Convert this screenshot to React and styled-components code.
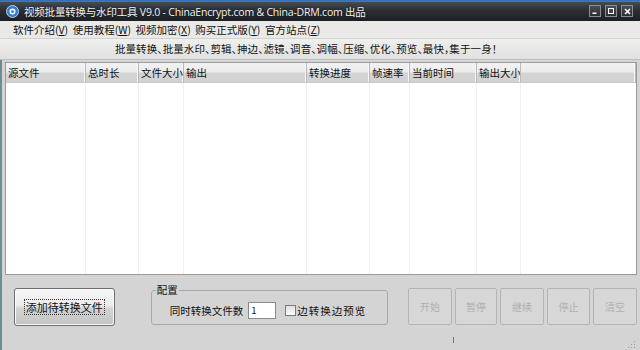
import React from "react";
import styled, { createGlobalStyle } from "styled-components";

const Global = createGlobalStyle`
  html, body { margin: 0; padding: 0; }
  body { width: 640px; height: 350px; overflow: hidden; background: #d6d6d6;
    font-family: "Noto Sans CJK SC", "Noto Sans", sans-serif; }
`;

const Win = styled.div`
  width: 640px; height: 350px; display: flex; flex-direction: column;
  background: #d6d6d6; overflow: hidden;
`;

const TitleBar = styled.div`
  height: 21px; flex: none; display: flex; align-items: center;
  background: linear-gradient(#2f6fba 0px, #3a78c0 1.5px, #454a52 2.5px, #2c3036 10px, #1c1f24 21px);
  color: #fff; padding: 1px 7px 0 6px; gap: 5px; box-sizing: border-box;
`;

const TitleText = styled.span`
  flex: 1; min-width: 0; white-space: nowrap; letter-spacing: -0.2px;
  font-family: "Open Sans", "Noto Sans CJK SC", sans-serif; font-size: 10.5px;
  text-shadow: 0 0 2px rgba(0,0,0,0.6); color: #f4f4f4;
`;

const Controls = styled.div`
  display: flex; gap: 4px; align-items: center; flex: none;
`;

const CtrlBtn = styled.div`
  width: 10px; height: 10px; border: 1px solid #8a8d92; background: linear-gradient(#4a4e54, #2a2d31);
  display: flex; align-items: center; justify-content: center;
`;

const MenuBar = styled.div`
  height: 17px; flex: none; display: flex; align-items: center; gap: 4.5px;
  background: #e9e9e7; padding-left: 13px; font-size: 10.5px; color: #111;
  font-feature-settings: "halt";
`;

const Slogan = styled.div`
  height: 21px; flex: none; display: flex; align-items: center; justify-content: center;
  background: linear-gradient(#f0f0ee, #e0e0de); font-size: 10.5px; color: #111;
  border-bottom: 1px solid #bdbdbd; padding-right: 28px; font-feature-settings: "halt";
  letter-spacing: 0.1px; box-shadow: inset 0 1px 0 #d2d2d2;
`;

const Body = styled.div`
  flex: 1; display: flex; flex-direction: column;
  border-left: 2px solid #6e8d92; padding: 2px 3px 0 3px;
  background: #d4d4d4;
`;

const List = styled.div`
  height: 211px; flex: none; background: #fff; border: 1px solid #9a9a9a;
  display: flex; flex-direction: column; overflow: hidden;
`;

const Header = styled.div`
  height: 19px; flex: none; display: flex;
  background: linear-gradient(#f2f2f2 0%, #ececec 45%, #d4d4d4 55%, #d2d2d2 100%);
  border-bottom: 1px solid #c9c9c9;
`;

const HeadCell = styled.div`
  width: ${p => p.w}px; flex: ${p => (p.grow ? 1 : "none")}; font-size: 10.5px; color: #111;
  padding-left: 2px; display: flex; align-items: center; white-space: nowrap; overflow: hidden;
  border-right: 1px solid #b9b9b9; box-shadow: inset -1px 0 0 #f6f6f6;
  box-sizing: border-box;
`;

const Rows = styled.div`
  flex: 1; display: flex;
`;

const ColLine = styled.div`
  width: ${p => p.w}px; flex: ${p => (p.grow ? 1 : "none")}; box-sizing: border-box;
  border-right: 1px solid ${p => (p.grow ? "transparent" : "#f0f0f0")};
`;

const Bottom = styled.div`
  flex: 1; display: flex; align-items: flex-start; padding: 13px 0 0 9px; position: relative;
`;

const AddButton = styled.button`
  width: 101px; height: 38px; border: 1px solid #6f6f6f; border-radius: 3px;
  background: linear-gradient(#f6f6f6 0%, #ececec 45%, #d2d2d2 55%, #c4c4c4 100%);
  font-family: inherit; font-size: 11px; color: #111; padding: 0;
  display: flex; align-items: center; justify-content: center;
  box-shadow: inset 0 0 0 1px #fafafa;
`;

const Focus = styled.span`
  border: 1px dotted #333; padding: 0 1px; line-height: 14px;
`;

const Group = styled.fieldset`
  margin: -4px 0 0 36px; width: 238px; height: 41px; box-sizing: border-box;
  border: 1px solid #a8a8a8; border-radius: 3px; padding: 0 0 0 18px;
  display: flex; align-items: center; gap: 5px; font-size: 10.5px; color: #111;
  legend { font-size: 10.5px; padding: 0 1px; margin-left: -14px; line-height: 12px; }
`;

const NumInput = styled.div`
  width: 24px; height: 15px; background: #fff; border: 1px solid #8a8a8a;
  font-size: 9.5px; padding-left: 2px; line-height: 15px; margin-right: 4px;
  box-sizing: content-box;
`;

const Check = styled.span`
  width: 9px; height: 9px; border: 1px solid #7a7a7a; background: linear-gradient(#e0e0e0, #fdfdfd);
  display: inline-block; margin-right: -4px;
`;

const CheckLabel = styled.span`
  letter-spacing: 1px;
`;

const Actions = styled.div`
  display: flex; gap: 3px; margin-left: 20px; margin-top: 0;
`;

const DisBtn = styled.div`
  width: ${p => p.w}px; height: 37px; box-sizing: border-box; border: 1px solid #b4b4b4;
  border-radius: 2px; background: #d7d7d7; color: #b0b0b0; font-size: 10px;
  display: flex; align-items: center; justify-content: center;
`;

const Caret = styled.div`
  position: absolute; left: 448px; top: 62px; width: 1px; height: 6px; background: #777;
`;

const Grip = styled.div`
  position: absolute; right: 2px; bottom: 2px; width: 8px; height: 8px;
  background: radial-gradient(circle, #9a9a9a 0.8px, transparent 1px) 0 0 / 3px 3px;
  clip-path: polygon(100% 0, 100% 100%, 0 100%);
`;

const cols = [
  ["源文件", 80], ["总时长", 53], ["文件大小", 45], ["输出", 123], ["转换进度", 63],
  ["帧速率", 40], ["当前时间", 67], ["输出大小", 44],
];

export default function App() {
  return (
    <Win>
      <Global />
      <TitleBar>
        <svg width="13" height="13" viewBox="0 0 13 13">
          <circle cx="6.5" cy="6.5" r="6" fill="#2f7fd6" stroke="#dfeaf7" strokeWidth="0.8" />
          <circle cx="6.5" cy="6.5" r="3" fill="#fff" />
          <circle cx="6.5" cy="6.5" r="1.6" fill="#3a8ae0" />
        </svg>
        <TitleText>视频批量转换与水印工具 V9.0 - ChinaEncrypt.com &amp; China-DRM.com 出品</TitleText>
        <Controls>
          <CtrlBtn>
            <svg width="6" height="6" viewBox="0 0 6 6"><rect x="0.5" y="4.5" width="4" height="1.5" fill="#fff" /></svg>
          </CtrlBtn>
          <CtrlBtn>
            <svg width="6" height="6" viewBox="0 0 6 6"><rect x="0.5" y="0.5" width="5" height="5" fill="none" stroke="#fff" strokeWidth="1.1" /></svg>
          </CtrlBtn>
          <CtrlBtn>
            <svg width="7" height="7" viewBox="0 0 7 7"><path d="M1 1 L6 6 M6 1 L1 6" stroke="#fff" strokeWidth="1.6" /></svg>
          </CtrlBtn>
        </Controls>
      </TitleBar>
      <MenuBar>
        <span>软件介绍(<u>V</u>)</span>
        <span>使用教程(<u>W</u>)</span>
        <span>视频加密(<u>X</u>)</span>
        <span>购买正式版(<u>Y</u>)</span>
        <span>官方站点(<u>Z</u>)</span>
      </MenuBar>
      <Slogan>批量转换、批量水印、剪辑、抻边、滤镜、调音、调幅、压缩、优化、预览、最快，集于一身！</Slogan>
      <Body>
        <List>
          <Header>
            {cols.map(([t, w]) => <HeadCell key={t} w={w}>{t}</HeadCell>)}
            <HeadCell grow />
          </Header>
          <Rows>
            {cols.map(([t, w]) => <ColLine key={t} w={w} />)}
            <ColLine grow />
          </Rows>
        </List>
        <Bottom>
          <AddButton><Focus>添加待转换文件</Focus></AddButton>
          <Group>
            <legend>配置</legend>
            <span>同时转换文件数</span>
            <NumInput>1</NumInput>
            <Check />
            <CheckLabel>边转换边预览</CheckLabel>
          </Group>
          <Actions>
            <DisBtn w={44}>开始</DisBtn>
            <DisBtn w={42}>暂停</DisBtn>
            <DisBtn w={44}>继续</DisBtn>
            <DisBtn w={43}>停止</DisBtn>
            <DisBtn w={44}>清空</DisBtn>
          </Actions>
          <Caret />
          <Grip />
        </Bottom>
      </Body>
    </Win>
  );
}
